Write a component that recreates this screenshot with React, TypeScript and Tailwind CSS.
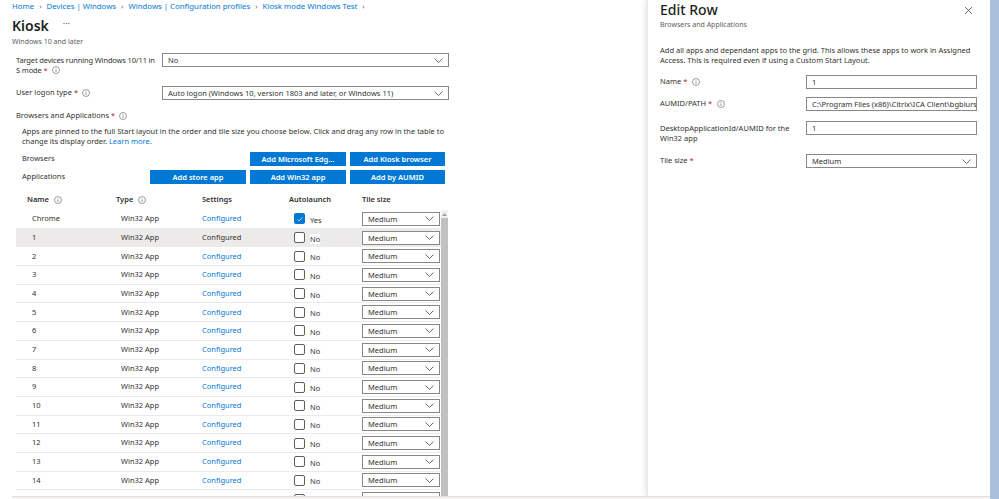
import React from "react";

const F = { fontFamily: '"Noto Sans", "Open Sans", Arial, sans-serif' };

function Info() {
  return (
    <svg width="8" height="8" viewBox="0 0 16 16" className="inline-block shrink-0">
      <circle cx="8" cy="8" r="7" fill="none" stroke="#605e5c" strokeWidth="1.2" />
      <line x1="8" y1="7" x2="8" y2="12" stroke="#605e5c" strokeWidth="1.3" />
      <circle cx="8" cy="4.6" r="0.9" fill="#605e5c" />
    </svg>
  );
}

function Chevron() {
  return (
    <svg width="9" height="5" viewBox="0 0 18 10" className="shrink-0">
      <polyline points="1,1 9,9 17,1" fill="none" stroke="#323130" strokeWidth="1.4" />
    </svg>
  );
}

function Select({ value, w, cls = "" }: { value: string; w: string; cls?: string }) {
  return (
    <div className={`${w} h-[14px] border border-[#8a8886] bg-white flex items-center justify-between pl-[5px] pr-[5px] ${cls}`}>
      <span className="text-[7.5px] text-[#323130] leading-[10px] whitespace-nowrap">{value}</span>
      <Chevron />
    </div>
  );
}

function Input({ value }: { value: string }) {
  return (
    <div className="w-[171px] h-[14px] border border-[#8a8886] bg-white flex items-center pl-[5px] overflow-hidden">
      <span className="text-[7.5px] text-[#323130] leading-[10px] whitespace-nowrap">{value}</span>
    </div>
  );
}

function Btn({ label, w }: { label: string; w: string }) {
  return (
    <div className={`${w} h-[14px] bg-[#0078d4] text-white text-[7.5px] font-semibold flex items-center justify-center leading-[10px]`}>
      {label}
    </div>
  );
}

function Req() {
  return <span className="text-[#a4262c] ml-[2px]">*</span>;
}

function Check({ on }: { on: boolean }) {
  return on ? (
    <div className="w-[11px] h-[11px] rounded-[2px] bg-[#0078d4] flex items-center justify-center">
      <svg width="8" height="8" viewBox="0 0 16 16">
        <polyline points="3,8.5 6.5,12 13,4.5" fill="none" stroke="white" strokeWidth="1.4" />
      </svg>
    </div>
  ) : (
    <div className="w-[11px] h-[11px] rounded-[2px] border border-[#605e5c] bg-white" />
  );
}

const rows = ["Chrome", "1", "2", "3", "4", "5", "6", "7", "8", "9", "10", "11", "12", "13", "14", "15"];

export default function App() {
  return (
    <div className="w-[999px] h-[499px] flex overflow-hidden bg-white text-[#323130]" style={F}>
      <div className="w-[990px] h-full flex flex-col">
        <div className="h-[496px] flex">
          {/* Main */}
          <div className="w-[647px] h-full pl-[12px] flex flex-col overflow-hidden">
            <div className="h-[14px] flex items-center text-[7.8px] text-[#0078d4] whitespace-nowrap gap-[5px]">
              <span>Home</span>
              <span className="text-[#605e5c]">›</span>
              <span>Devices | Windows</span>
              <span className="text-[#605e5c]">›</span>
              <span>Windows | Configuration profiles</span>
              <span className="text-[#605e5c]">›</span>
              <span>Kiosk mode Windows Test</span>
              <span className="text-[#605e5c]">›</span>
            </div>
            <div className="h-[23px] mt-[1px] flex items-center">
              <span className="text-[14px] font-semibold leading-none text-[#201f1e]">Kiosk</span>
              <span className="ml-[14px] text-[9px] text-[#605e5c] leading-none -mt-[4px]">···</span>
            </div>
            <div className="h-[8px] flex items-center text-[7px] text-[#605e5c] leading-none">Windows 10 and later</div>
            <div className="w-[438px] ml-[4px] mt-[8px] flex flex-col">
              <div className="h-[33px] flex">
                <div className="w-[146px] pr-[2px] pt-[2px] text-[7.5px] leading-[10px] tracking-[-0.15px]">
                  <div>Target devices running Windows 10/11 in</div>
                  <div className="flex items-center">
                    S mode<Req />
                    <span className="ml-[4px] inline-flex"><Info /></span>
                  </div>
                </div>
                <Select value="No" w="w-[287px]" />
              </div>
              <div className="h-[14px] flex items-center">
                <div className="w-[146px] text-[7.5px] flex items-center">
                  User logon type<Req />
                  <span className="ml-[4px] inline-flex"><Info /></span>
                </div>
                <Select value="Auto logon (Windows 10, version 1803 and later, or Windows 11)" w="w-[287px]" />
              </div>
              <div className="h-[10px] mt-[11px] flex items-center text-[7.5px]">
                Browsers and Applications<Req />
                <span className="ml-[4px] inline-flex"><Info /></span>
              </div>
              <div className="ml-[6px] mt-[5px] text-[7.5px] leading-[10px] w-[432px]">
                Apps are pinned to the full Start layout in the order and tile size you choose below. Click and drag any row in the table to change its display order. <span className="text-[#0078d4]">Learn more.</span>
              </div>
              <div className="mt-[6px] h-[14px] flex items-center ml-[6px]">
                <span className="text-[7.5px] flex-1">Browsers</span>
                <div className="flex gap-[4px] mr-[9px]">
                  <Btn label="Add Microsoft Edg..." w="w-[96px]" />
                  <Btn label="Add Kiosk browser" w="w-[95px]" />
                </div>
              </div>
              <div className="mt-[4px] h-[14px] flex items-center ml-[6px]">
                <span className="text-[7.5px] flex-1">Applications</span>
                <div className="flex gap-[4px] mr-[9px]">
                  <Btn label="Add store app" w="w-[96px]" />
                  <Btn label="Add Win32 app" w="w-[96px]" />
                  <Btn label="Add by AUMID" w="w-[95px]" />
                </div>
              </div>
              {/* Table header */}
              <div className="mt-[6px] h-[20px] flex items-center text-[7.5px] font-semibold w-[425px]">
                <div className="w-[100px] pl-[11px] flex items-center gap-[5px]">Name <Info /></div>
                <div className="w-[86px] flex items-center gap-[5px]">Type <Info /></div>
                <div className="w-[87px]">Settings</div>
                <div className="w-[73px]">Autolaunch</div>
                <div className="w-[79px]">Tile size</div>
              </div>
              {/* Table body */}
              <div className="flex h-[286px] overflow-hidden">
                <div className="w-[425px] flex flex-col">
                  {rows.map((r, i) => (
                    <div
                      key={r}
                      className={`h-[18.7px] shrink-0 flex items-center text-[7.5px] border-b border-[#edebe9] ${i === 1 ? "bg-[#edebe9]" : ""}`}
                    >
                      <div className="w-[100px] pl-[16px]">{r}</div>
                      <div className="w-[86px] pl-[5px]">Win32 App</div>
                      <div className={`w-[87px] ${i === 1 ? "text-[#323130]" : "text-[#0078d4]"}`}>Configured</div>
                      <div className="w-[73px] pl-[5px] flex items-center gap-[5px]">
                        <Check on={i === 0} />
                        <span className={`${i === 0 ? "" : "bg-white"} leading-[10px] mt-[2px]`}>{i === 0 ? "Yes" : "No"}</span>
                      </div>
                      <Select value="Medium" w="w-[78px]" />
                    </div>
                  ))}
                </div>
                <div className="w-[7px] flex flex-col bg-[#f1f1f1]">
                  <div className="h-[8px] flex items-center justify-center">
                    <svg width="5" height="3" viewBox="0 0 10 6">
                      <polygon points="5,0 10,6 0,6" fill="#a3a3a3" />
                    </svg>
                  </div>
                  <div className="flex-1 bg-[#c1c1c1]" />
                </div>
              </div>
            </div>
          </div>
          {/* Right panel */}
          <div className="w-[343px] h-full bg-white shadow-[-2px_0_5px_rgba(0,0,0,0.10)] border-l border-[#e8e8e8] pl-[12px] pr-[12px] flex flex-col">
            <div className="h-[20px] flex items-center justify-between">
              <span className="text-[14px] leading-none text-[#201f1e]" style={{ fontWeight: 500 }}>Edit Row</span>
              <svg width="9" height="9" viewBox="0 0 16 16" className="mr-[5px]">
                <line x1="2" y1="2" x2="14" y2="14" stroke="#323130" strokeWidth="1.3" />
                <line x1="14" y1="2" x2="2" y2="14" stroke="#323130" strokeWidth="1.3" />
              </svg>
            </div>
            <div className="h-[8px] flex items-center text-[7px] text-[#605e5c] leading-none">Browsers and Applications</div>
            <div className="mt-[17px] text-[7.5px] leading-[10px] w-[322px]">
              Add all apps and dependant apps to the grid. This allows these apps to work in Assigned Access. This is required even if using a Custom Start Layout.
            </div>
            <div className="mt-[10px] flex items-center h-[14px]">
              <div className="w-[146px] text-[7.5px] flex items-center">Name<Req /><span className="ml-[5px] inline-flex"><Info /></span></div>
              <Input value="1" />
            </div>
            <div className="mt-[8px] flex items-center h-[14px]">
              <div className="w-[146px] text-[7.5px] flex items-center">AUMID/PATH<Req /><span className="ml-[5px] inline-flex"><Info /></span></div>
              <Input value="C:\Program Files (x86)\Citrix\ICA Client\bgblursvc.exe" />
            </div>
            <div className="mt-[10px] flex h-[24px]">
              <div className="w-[146px] text-[7.5px] leading-[10px] pt-[2px]">DesktopApplicationId/AUMID for the Win32 app</div>
              <Input value="1" />
            </div>
            <div className="mt-[9px] flex items-center h-[14px]">
              <div className="w-[146px] text-[7.5px] flex items-center">Tile size<Req /></div>
              <Select value="Medium" w="w-[171px]" />
            </div>
          </div>
        </div>
        <div className="h-[3px] border-t border-[#e1dfdd] bg-[#f3f2f1] ml-[12px]" />
      </div>
      <div className="w-[9px] h-full bg-[#a8c0db]" />
    </div>
  );
}
